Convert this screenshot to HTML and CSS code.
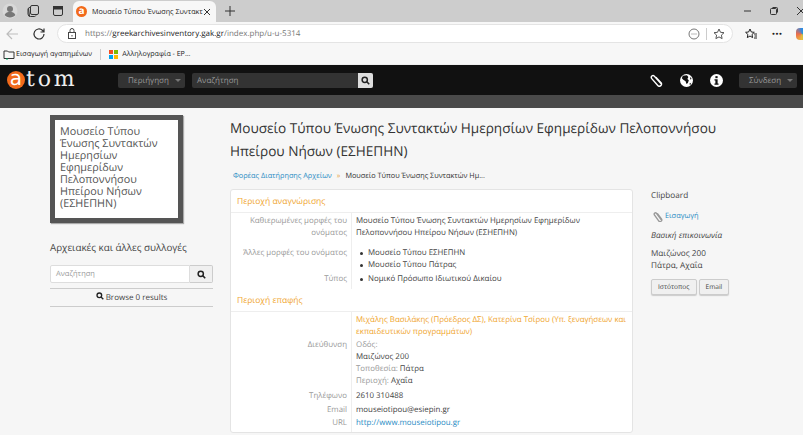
FILE: index.html
```html
<!DOCTYPE html>
<html lang="el">
<head>
<meta charset="UTF-8">
<meta name="viewport" content="width=device-width, initial-scale=1.0">
<title>Μουσείο Τύπου</title>
<link rel="stylesheet" href="styles.css">
</head>
<body>

<!-- Browser tab strip -->
<div class="tabstrip">
  <svg class="profile" viewBox="0 0 16 16" width="16" height="16"><circle cx="8" cy="8" r="7.5" fill="#d8d8d8"/><circle cx="8" cy="6" r="3" fill="#777"/><path d="M2.6 12c1-2.400 3-3.200 5.400-3.200s4.400.8 5.400 3.200c-1.200 1.600-3.200 2.500-5.400 2.500s-4.200-.9-5.400-2.500z" fill="#777"/></svg>
  <svg class="strip-icon" viewBox="0 0 14 14" width="14" height="14" fill="none" stroke="#333"><rect x="4.500" y="1.500" width="8" height="9" rx="1.500"/><path d="M4 3.500a2 2 0 0 0-2 1.500v5a2.500 2.500 0 0 0 2.500 2.500h4a2 2 0 0 0 1.500-1"/><path d="M2.500 4.500l1 8"/></svg>
  <svg class="strip-icon" viewBox="0 0 14 14" width="14" height="14" fill="none" stroke="#333"><rect x="2.500" y="2.500" width="9" height="9" rx="1.500"/><rect x="2.500" y="2.500" width="9" height="2.500" fill="#333"/></svg>
  <div class="tab">
    <span class="tab-favicon">a</span>
    <span class="tab-title">Μουσείο Τύπου Ένωσης Συντακτ</span>
    <svg viewBox="0 0 8 8" width="8" height="8" stroke="#333"><path d="M1 1l6 6M7 1l-6 6"/></svg>
  </div>
  <svg class="new-tab" viewBox="0 0 10 10" width="10" height="10" stroke="#333"><path d="M5 0v10M0 5h10"/></svg>
  <div class="window-btns">
    <svg viewBox="0 0 10 10" width="10" height="10" stroke="#333"><path d="M2 5h7"/></svg>
    <svg viewBox="0 0 10 10" width="10" height="10" fill="none" stroke="#333"><rect x="1.500" y="2.500" width="6" height="6" rx="1"/><path d="M3.500 1.500h4a1 1 0 0 1 1 1v4"/></svg>
    <svg viewBox="0 0 10 10" width="10" height="10" stroke="#333"><path d="M1 1l8 8M9 1l-8 8"/></svg>
  </div>
</div>

<!-- Address bar -->
<div class="toolbar">
  <svg class="nav-icon" viewBox="0 0 14 14" width="14" height="14" fill="none" stroke="#bdbdbd" stroke-width="1.200"><path d="M13 7H2M7 2L2 7l5 5"/></svg>
  <svg class="nav-icon" viewBox="0 0 14 14" width="14" height="14" fill="none" stroke="#333" stroke-width="1.200"><path d="M12 7a5 5 0 1 1-1.600-3.700L12 5M12 1.500V5H8.500"/></svg>
  <div class="address">
    <svg viewBox="0 0 10 12" width="10" height="12" fill="none" stroke="#444"><rect x="1.500" y="4.500" width="7" height="6"/><path d="M3 4.500V2.500a2 2 0 0 1 4 0v2M5 7v1.500"/></svg>
    <span class="url"><span class="url-dim">https://</span>greekarchivesinventory.gak.gr<span class="url-dim">/index.php/u-u-5314</span></span>
    <svg viewBox="0 0 12 12" width="12" height="12" fill="none" stroke="#777"><circle cx="6" cy="6" r="5"/><path d="M3.500 6h1M5.500 6h1M7.500 6h1"/></svg>
    <span class="addr-sep"></span>
    <svg viewBox="0 0 12 12" width="12" height="12" fill="none" stroke="#555"><path d="M6 1l1.500 3.300 3.500.4-2.600 2.400.7 3.500L6 8.900l-3.100 1.700.7-3.500L1 4.700l3.500-.4z"/></svg>
  </div>
  <svg class="tool-icon" viewBox="0 0 12 12" width="12" height="12" fill="none" stroke="#222"><path d="M5 1l1.300 3 3 .3-2.300 2.200.6 3.100L5 8l-2.700 1.600.6-3.100L.6 4.300l3-.3z"/><path d="M9 6h3M9.500 8H12M9 10h3"/></svg>
  <span class="dots">···</span>
  <span class="copilot"></span>
</div>

<!-- Favourites bar -->
<div class="favbar">
  <svg viewBox="0 0 12 12" width="12" height="12" fill="none" stroke="#333"><path d="M1 3h3.500l1 1H11v6.500H1z"/><path d="M3 11h2" stroke="#0a6"/></svg>
  <span class="fav-text">Εισαγωγή αγαπημένων</span>
  <span class="fav-sep"></span>
  <span class="ms-logo"><i class="ms-r"></i><i class="ms-g"></i><i class="ms-b"></i><i class="ms-y"></i></span>
  <span class="fav-text">Αλληλογραφία - ΕΡ...</span>
</div>

<!-- Site header -->
<header class="site-header">
  <div class="logo"><span class="logo-a">a</span><span class="logo-rest">tom</span></div>
  <div class="dropdown browse-btn">Περιήγηση <span class="caret"></span></div>
  <div class="top-search">
    <span class="top-search-text">Αναζήτηση</span>
    <span class="top-search-btn"><svg viewBox="0 0 12 12" width="9" height="9" fill="none" stroke="#222" stroke-width="2"><circle cx="5" cy="5" r="3.500"/><path d="M7.500 7.500l3.500 3.500"/></svg></span>
  </div>
  <div class="header-icons">
    <svg viewBox="0 0 14 14" width="13" height="13" fill="none" stroke="#fff" stroke-width="1.500"><path d="M12 10.500L4.500 2.200a1.900 1.900 0 0 0-2.800 2.500l6.700 7.600a2.300 2.300 0 0 0 3.500-3L6.300 3.500"/></svg>
    <svg viewBox="0 0 14 14" width="13" height="13"><circle cx="7" cy="7" r="7" fill="#fff"/><path d="M3 1.800l4.500-.5 1.500 2-1 2 1.500 1.500-1 3-1.500 1-1-3-2.500-1.500L2 4.500zM11 3l1.500 2.500-1.500.5zM10 10.500l2-1-1 2.500z" fill="#111"/></svg>
    <svg viewBox="0 0 14 14" width="13" height="13"><circle cx="7" cy="7" r="7" fill="#fff"/><rect x="5.800" y="2.300" width="2.400" height="2.200" fill="#111"/><path d="M4.800 5.700h3.400v4.600h1v1.400H4.800v-1.400h1V7.100h-1z" fill="#111"/></svg>
  </div>
  <div class="dropdown login-btn">Σύνδεση <span class="caret"></span></div>
</header>
<div class="subheader"></div>

<!-- Page body -->
<div class="page">

  <aside class="sidebar">
    <div class="repo-logo">Μουσείο Τύπου Ένωσης Συντακτών Ημερησίων Εφημερίδων Πελοποννήσου Ηπείρου Νήσων (ΕΣΗΕΠΗΝ)</div>
    <h3 class="side-title">Αρχειακές και άλλες συλλογές</h3>
    <div class="side-search">
      <span class="side-input">Αναζήτηση</span>
      <span class="side-btn"><svg viewBox="0 0 12 12" width="9" height="9" fill="none" stroke="#222" stroke-width="2"><circle cx="5" cy="5" r="3.500"/><path d="M7.500 7.500l3.500 3.500"/></svg></span>
    </div>
    <div class="browse-results"><svg viewBox="0 0 12 12" width="8" height="8" fill="none" stroke="#222" stroke-width="2"><circle cx="5" cy="5" r="3.500"/><path d="M7.500 7.500l3.500 3.500"/></svg> Browse 0 results</div>
  </aside>

  <main class="main">
    <h1 class="page-title">Μουσείο Τύπου Ένωσης Συντακτών Ημερησίων Εφημερίδων Πελοποννήσου Ηπείρου Νήσων (ΕΣΗΕΠΗΝ)</h1>
    <div class="breadcrumb"><a>Φορέας Διατήρησης Αρχείων</a><span class="crumb-sep">»</span><span>Μουσείο Τύπου Ένωσης Συντακτών Ημ...</span></div>

    <div class="columns">
      <div class="card">
        <h2 class="section-head">Περιοχή αναγνώρισης</h2>
        <div class="field pad-2"><div class="label">Καθιερωμένες μορφές του ονόματος</div><div class="value">Μουσείο Τύπου Ένωσης Συντακτών Ημερησίων Εφημερίδων Πελοποννήσου Ηπείρου Νήσων (ΕΣΗΕΠΗΝ)</div></div>
        <div class="field pad-8"><div class="label">Άλλες μορφές του ονόματος</div><div class="value"><ul><li>Μουσείο Τύπου ΕΣΗΕΠΗΝ</li><li>Μουσείο Τύπου Πάτρας</li></ul></div></div>
        <div class="field pad-2 pad-end"><div class="label">Τύπος</div><div class="value"><ul><li>Νομικό Πρόσωπο Ιδιωτικού Δικαίου</li></ul></div></div>

        <h2 class="section-head">Περιοχή επαφής</h2>
        <div class="field pad-2"><div class="label"></div><div class="value contact-name">Μιχάλης Βασιλάκης (Πρόεδρος ΔΣ), Κατερίνα Τσίρου (Υπ. ξεναγήσεων και εκπαιδευτικών προγραμμάτων)</div></div>
        <div class="field pad-1"><div class="label">Διεύθυνση</div><div class="value"><span class="dim">Οδός:</span><br>Μαιζώνος 200<br><span class="dim">Τοποθεσία:</span> Πάτρα<br><span class="dim">Περιοχή:</span> Αχαΐα</div></div>
        <div class="field pad-3"><div class="label">Τηλέφωνο</div><div class="value">2610 310488</div></div>
        <div class="field pad-2"><div class="label">Email</div><div class="value">mouseiotipou@esiepin.gr</div></div>
        <div class="field pad-1 pad-last"><div class="label">URL</div><div class="value"><a>http://www.mouseiotipou.gr</a></div></div>
      </div>

      <aside class="context">
        <div class="ctx-title">Clipboard</div>
        <div class="ctx-add"><svg viewBox="0 0 14 16" width="10" height="11" fill="none" stroke="#999" stroke-width="2"><path d="M11.500 12.500L4.500 3a2 2 0 0 0-3 2.300l6.500 9a2.400 2.400 0 0 0 4-2.800L6 3.500"/></svg><a>Εισαγωγή</a></div>
        <div class="ctx-em">Βασική επικοινωνία</div>
        <div class="ctx-addr">Μαιζώνος 200<br>Πάτρα, Αχαΐα</div>
        <div class="ctx-btns"><span class="ctx-btn">Ιστότοπος</span><span class="ctx-btn">Email</span></div>
      </aside>
    </div>
  </main>
</div>

</body>
</html>
```

FILE: styles.css
```css
/* Base */
html, body {
  height: 435px;
  overflow: hidden;
}

body {
  margin: 0;
  background-color: #f6f6f6;
  font-family: "Open Sans", "Noto Sans", sans-serif;
  font-size: 8px;
  color: #333;
  text-rendering: geometricPrecision;
}

/* Browser tab strip */
.tabstrip {
  display: flex;
  align-items: center;
  height: 22px;
  background-color: #cdcdcd;
  padding-left: 2px;
  overflow: hidden;
}

.profile {
  flex: none;
  margin-right: 8px;
}

.strip-icon {
  margin-right: 11px;
  flex: none;
}

.tab {
  display: flex;
  align-items: center;
  flex: none;
  width: 143px;
  height: 21px;
  margin: 1px 0 0 -3px;
  padding: 0 5px 0 3px;
  box-sizing: border-box;
  background-color: #f7f7f7;
  border-radius: 6px 6px 0 0;
}

.tab-favicon {
  flex: none;
  width: 11px;
  height: 11px;
  border-radius: 50%;
  background-color: #f26a1b;
  color: #fff;
  font-size: 10px;
  line-height: 9px;
  text-align: center;
  font-weight: bold;
  margin-right: 5px;
}

.tab-title {
  flex: 1;
  overflow: hidden;
  white-space: nowrap;
  font-size: 7.200px;
  color: #222;
}

.new-tab {
  flex: none;
  margin-left: 9px;
}

.window-btns {
  display: flex;
  flex: none;
  gap: 17px;
  margin-left: auto;
  margin-right: -3px;
}

.window-btns svg {
  flex: none;
}

/* Address bar */
.toolbar {
  display: flex;
  align-items: center;
  height: 23px;
  background-color: #f7f7f7;
  padding-left: 5px;
  overflow: hidden;
}

.nav-icon {
  flex: none;
  margin-right: 13px;
}

.nav-icon + .nav-icon {
  margin-right: 11px;
}

.address {
  display: flex;
  align-items: center;
  width: 676px;
  height: 19px;
  padding: 0 7px 0 9px;
  box-sizing: border-box;
  background-color: #fff;
  border: 1px solid #e4e4e4;
  border-radius: 10px;
  flex: none;
}

.url {
  flex: 1;
  margin-left: 8px;
  font-size: 8px;
  color: #222;
  white-space: nowrap;
}

.url-dim {
  color: #777;
}

.addr-sep {
  width: 1px;
  height: 12px;
  margin: 0 6px;
  background-color: #ccc;
}

.tool-icon {
  flex: none;
  margin-left: 12px;
}

.dots {
  flex: none;
  width: 14px;
  margin-left: 13px;
  font-size: 12px;
  font-weight: bold;
  text-align: center;
  color: #222;
}

.copilot {
  flex: none;
  width: 12px;
  height: 12px;
  margin-left: 12px;
  border-radius: 4px;
  background: conic-gradient(#2a8be8, #3ab6a0, #e9c13c, #ee6b4a, #2a8be8);
}

/* Favourites bar */
.favbar {
  display: flex;
  align-items: center;
  height: 20px;
  padding: 0 0 1px 3px;
  background-color: #f7f7f7;
  border-bottom: 1px solid #eee;
  box-sizing: border-box;
}

.fav-text {
  margin-left: 1px;
  font-size: 7.100px;
  color: #222;
}

.fav-sep {
  width: 1px;
  height: 11px;
  margin: 0 8px;
  background-color: #ccc;
}

.ms-logo {
  display: grid;
  grid-template-columns: 4px 4px;
  gap: 1px;
  margin-right: 3px;
}

.ms-logo i {
  width: 4px;
  height: 4px;
}

.ms-r { background-color: #f25022; }
.ms-g { background-color: #7fba00; }
.ms-b { background-color: #00a4ef; }
.ms-y { background-color: #ffb900; }

/* Site header */
.site-header {
  display: flex;
  align-items: center;
  height: 30px;
  padding-left: 7px;
  background-color: #111;
}

.logo {
  display: flex;
  align-items: center;
  width: 111px;
  flex: none;
}

.logo-a {
  width: 18px;
  height: 18px;
  border-radius: 50%;
  background-color: #f26a1b;
  color: #fff;
  font-family: "DejaVu Sans", sans-serif;
  font-size: 20px;
  line-height: 15px;
  text-align: center;
}

.logo-rest {
  margin-left: 1px;
  font-family: "DejaVu Serif", serif;
  font-size: 22px;
  line-height: 24px;
  letter-spacing: 2.800px;
  color: #eee;
}

.dropdown {
  display: flex;
  align-items: center;
  justify-content: space-between;
  height: 15px;
  padding: 0 4px 0 10px;
  box-sizing: border-box;
  background-color: #333;
  border-radius: 2px;
  color: #999;
  font-size: 8px;
}

.browse-btn {
  width: 67px;
}

.caret {
  border-left: 3px solid transparent;
  border-right: 3px solid transparent;
  border-top: 3px solid #777;
}

.top-search {
  display: flex;
  align-items: center;
  justify-content: space-between;
  width: 181px;
  height: 15px;
  margin-left: 7px;
  background-color: #333;
  border-radius: 2px;
}

.top-search-text {
  margin-left: 5px;
  color: #999;
  font-size: 8px;
}

.top-search-btn {
  display: flex;
  align-items: center;
  justify-content: center;
  width: 15px;
  height: 15px;
  background-color: #ddd;
  border-radius: 0 2px 2px 0;
}

.header-icons {
  display: flex;
  align-items: center;
  gap: 17px;
  margin-left: auto;
}

.login-btn {
  width: 58px;
  margin: 0 6px 0 16px;
}

.subheader {
  height: 13px;
  background-color: #4a4a4a;
}

/* Page columns */
.page {
  display: flex;
  padding-left: 50px;
}

.sidebar {
  width: 163px;
  flex: none;
  padding-top: 7px;
}

.repo-logo {
  width: 133px;
  padding: 6px 5px 8px;
  border: 5px solid #555;
  background-color: #fff;
  box-sizing: border-box;
  font-size: 10.800px;
  line-height: 12px;
  color: #555;
  box-shadow: 1px 1px 1px #aaa;
}

.side-title {
  margin: 17.500px 0 0;
  font-size: 9.800px;
  font-weight: normal;
  color: #444;
}

.side-search {
  display: flex;
  margin-top: 11.500px;
  height: 18px;
}

.side-input {
  flex: 1;
  padding: 3px 5px;
  background-color: #fff;
  border: 1px solid #ddd;
  color: #999;
  font-size: 7.500px;
  border-radius: 2px 0 0 2px;
}

.side-btn {
  display: flex;
  align-items: center;
  justify-content: center;
  width: 22px;
  background-color: #f0f0f0;
  border: 1px solid #ccc;
  border-left: none;
  border-radius: 0 2px 2px 0;
}

.browse-results {
  margin-top: 5px;
  padding: 3px 0;
  text-align: center;
  font-size: 8px;
  line-height: 11px;
  border-top: 1px solid #ccc;
  border-bottom: 1px solid #ccc;
  color: #444;
}

.main {
  margin-left: 17px;
  width: 560px;
}

.page-title {
  margin: 8px 0 0;
  font-size: 13.600px;
  font-weight: normal;
  line-height: 23px;
  color: #333;
  width: 530px;
}

.breadcrumb {
  margin-top: 8px;
  padding-left: 3px;
  font-size: 7.300px;
  line-height: 12px;
  color: #333;
}

.breadcrumb a, .ctx-add a, .value a {
  color: #2a8cc4;
}

.crumb-sep {
  margin: 0 5px;
  color: #e8a33a;
}

.columns {
  display: flex;
  margin-top: 7px;
}

/* Main card */
.card {
  width: 403px;
  flex: none;
  background-color: #fff;
  border: 1px solid #e4e4e4;
  border-radius: 3px;
  box-sizing: border-box;
}

.section-head {
  margin: 0;
  padding: 0 6px;
  height: 23px;
  line-height: 24px;
  box-sizing: border-box;
  font-size: 8.500px;
  font-weight: normal;
  color: #f0a52e;
  border-bottom: 1px solid #eee;
}

.field {
  display: flex;
  line-height: 12px;
  font-size: 7.900px;
}

.label {
  width: 121px;
  flex: none;
  padding: 1px 4px 0 0;
  box-sizing: border-box;
  text-align: right;
  color: #999;
  border-right: 1px solid #eee;
}

.value {
  flex: 1;
  padding: 1px 4px 0 4px;
  color: #444;
}

/* Spacing between rows, kept inside the cells so the divider stays unbroken */
.pad-1 .label, .pad-1 .value { padding-top: 1px; }
.pad-2 .label, .pad-2 .value { padding-top: 2px; }
.pad-3 .label, .pad-3 .value { padding-top: 3px; }
.pad-8 .label, .pad-8 .value { padding-top: 8px; }
.pad-end .label, .pad-end .value { padding-bottom: 4px; }
.pad-last .label, .pad-last .value { padding-bottom: 3px; }

.value ul {
  margin: 0;
  padding-left: 4px;
  list-style: none;
}

.value li {
  display: flex;
  align-items: center;
  gap: 5px;
}

.value li::before {
  content: "";
  width: 3px;
  height: 3px;
  border-radius: 50%;
  background-color: #333;
}

.value.contact-name {
  color: #f0a52e;
}

.dim {
  color: #999;
}

/* Right column */
.context {
  margin-left: 18px;
  padding-top: 1px;
  font-size: 8.200px;
  line-height: 12px;
  color: #444;
}

.ctx-add {
  display: flex;
  align-items: center;
  gap: 2px;
  margin: 8px 0 0 2px;
  font-size: 7.400px;
}

.ctx-em {
  margin-top: 8px;
  font-style: italic;
}

.ctx-addr {
  margin-top: 6px;
}

.ctx-btns {
  display: flex;
  gap: 2px;
  margin-top: 7px;
}

.ctx-btn {
  padding: 2px 6px;
  font-size: 6.600px;
  line-height: 10px;
  background-color: #f0f0f0;
  border: 1px solid #ccc;
  border-radius: 2px;
  box-shadow: 0 1px 1px #ccc;
}
```
